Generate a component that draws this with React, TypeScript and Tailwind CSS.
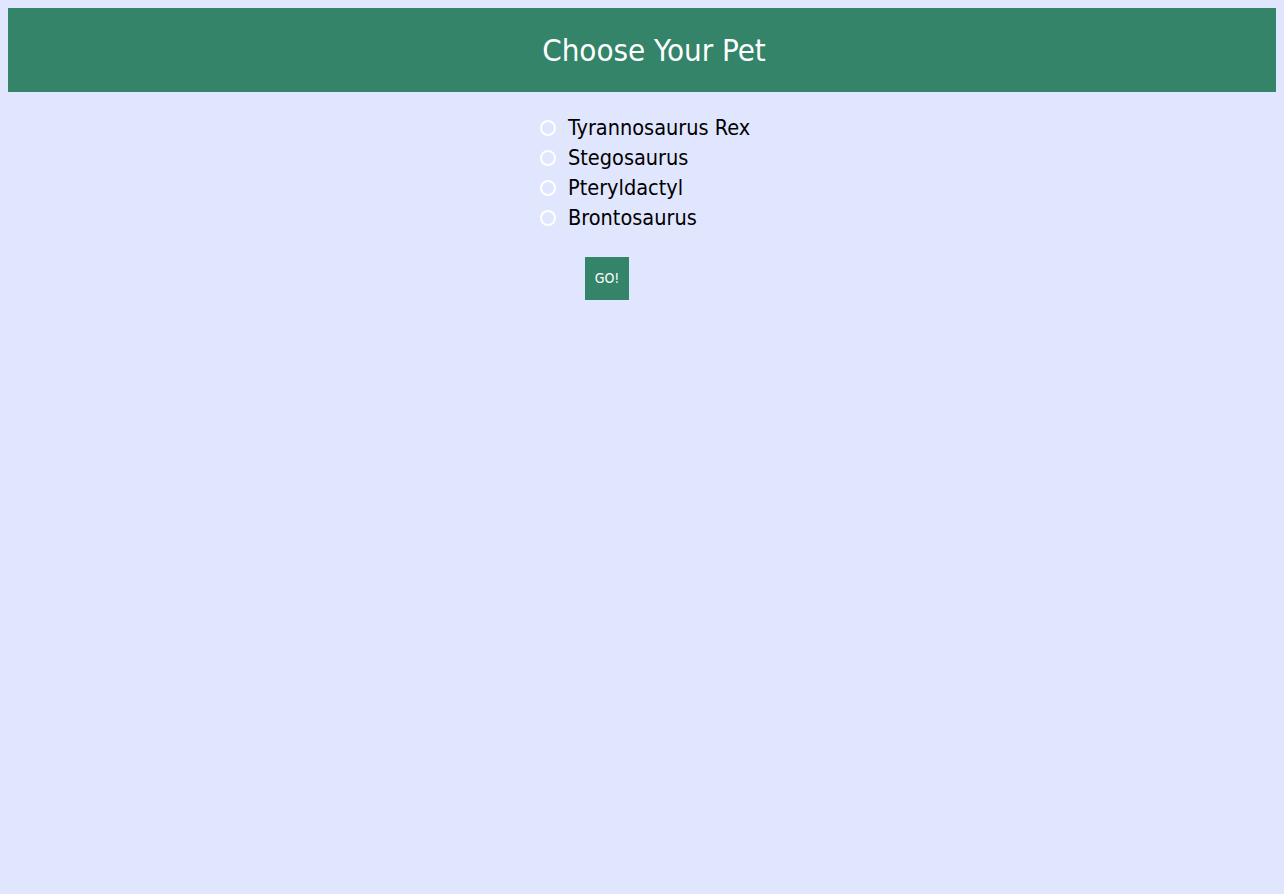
import React, { useState } from 'react';

const pets = ['Tyrannosaurus Rex', 'Stegosaurus', 'Pteryldactyl', 'Brontosaurus'];

const App: React.FC = () => {
    const [pet, setPet] = useState('');

    return (
        <div
            className="min-h-screen bg-[#e1e6ff] p-2"
            style={{ fontFamily: '"Liberation Sans Narrow", "DejaVu Sans Condensed", "Liberation Sans", sans-serif' }}
        >
            <header className="h-[84px] bg-[#338468] flex items-center justify-center">
                <h1 className="text-[31px] text-white pl-[24px] leading-none">Choose Your Pet</h1>
            </header>

            <form className="w-[204px] mx-auto pt-[21px]" onSubmit={(e) => e.preventDefault()}>
                <div className="flex flex-col">
                    {pets.map((p) => (
                        <label key={p} className="h-[30px] flex items-center gap-3 cursor-pointer">
                            <input
                                type="radio"
                                name="pet"
                                value={p}
                                checked={pet === p}
                                onChange={() => setPet(p)}
                                className="appearance-none w-4 h-4 rounded-full border-2 border-white shrink-0 checked:bg-white"
                            />
                            <span className="text-[21.5px] text-black whitespace-nowrap">{p}</span>
                        </label>
                    ))}
                </div>
                <button
                    type="submit"
                    className="mt-[24px] ml-[45px] w-[44px] h-[43px] bg-[#338468] text-white text-[14px]"
                >
                    GO!
                </button>
            </form>
        </div>
    );
};

export default App;
